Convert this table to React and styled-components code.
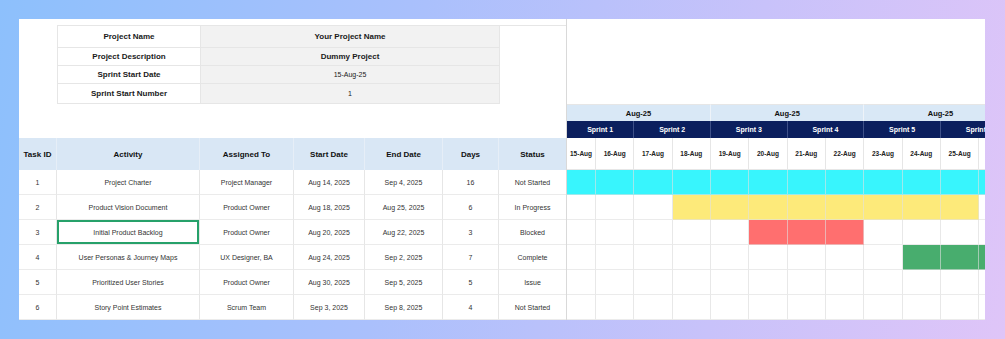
import React from 'react';
import styled, { createGlobalStyle } from 'styled-components';

const GlobalStyle = createGlobalStyle`
  * { box-sizing: border-box; }
  body {
    margin: 0;
    font-family: "Liberation Sans", Arial, sans-serif;
  }
`;

const Page = styled.div`
  width: 1005px;
  height: 339px;
  padding: 19px 20px 19px 19px;
  background: linear-gradient(100deg, #8dc0fc 0%, #aac0fc 40%, #c8c2fa 72%, #dfc5f8 100%);
`;

const Sheet = styled.div`
  display: flex;
  height: 301px;
  background: #fff;
  overflow: hidden;
`;

const Left = styled.div`
  width: 548px;
  flex: none;
  padding-top: 6px;
  border-right: 1px solid #d9d9d9;
`;

const Info = styled.div`
  display: grid;
  grid-template-columns: 143px 299px;
  grid-template-rows: 22px 18px 18px 20px;
  margin: 0 0 34px 38px;
  border-top: 1px solid #e6e6e6;
  border-left: 1px solid #e6e6e6;
`;

const InfoCell = styled.div`
  display: flex;
  align-items: center;
  justify-content: center;
  background: ${p => (p.$value ? '#f2f2f2' : '#fff')};
  border-right: 1px solid #e6e6e6;
  border-bottom: 1px solid #e6e6e6;
  font-size: ${p => (p.$light ? '7px' : '8px')};
  font-weight: ${p => (p.$light ? 400 : 700)};
  color: #1a1a1a;
`;

const cols = '38px 143px 94px 71px 78px 56px 67px';

const Row = styled.div`
  display: grid;
  grid-template-columns: ${cols};
  height: ${p => p.$h}px;
`;

const HeadCell = styled.div`
  display: flex;
  align-items: center;
  justify-content: center;
  background: #d9e7f5;
  border-right: 1px solid #e6eef7;
  font-size: 8px;
  font-weight: 700;
  color: #111;
  &:last-child { border-right: none; }
`;

const Cell = styled.div`
  display: flex;
  align-items: center;
  justify-content: center;
  border-right: 1px solid #e6e6e6;
  border-bottom: 1px solid #ebebeb;
  font-size: 7px;
  color: #333;
  box-shadow: ${p => (p.$selected ? 'inset 0 0 0 2px #26a16a' : 'none')};
  &:last-child { border-right: none; }
`;

const Gantt = styled.div`
  flex: 1;
  min-width: 0;
  overflow: hidden;
  padding-top: 85px;
`;

const GRow = styled.div`
  display: grid;
  grid-template-columns: 29px repeat(12, 38.33px);
  height: ${p => p.$h}px;
  width: 500px;
`;

const MonthCell = styled.div`
  grid-column: span 4;
  display: flex;
  align-items: center;
  justify-content: center;
  background: #d9e8f6;
  border-top: 1px solid #e6e6e6;
  border-right: 1px solid #eef3f9;
  font-size: 7.5px;
  font-weight: 700;
  color: #111;
`;

const SprintCell = styled.div`
  grid-column: span 2;
  display: flex;
  align-items: center;
  justify-content: center;
  background: #0b1f5e;
  border-right: 1px solid #3e5088;
  font-size: 7px;
  font-weight: 700;
  color: #fff;
`;

const DayCell = styled.div`
  display: flex;
  align-items: center;
  justify-content: center;
  border-right: 1px solid #e6e6e6;
  border-bottom: 1px solid #e6e6e6;
  font-size: 6.5px;
  font-weight: 700;
  color: #222;
`;

const BarCell = styled.div`
  background: ${p => p.$fill || '#fff'};
  border-right: 1px solid ${p => (p.$fill ? 'rgba(225,225,225,0.6)' : '#e8e8e8')};
  border-bottom: 1px solid ${p => (p.$fill ? 'rgba(225,225,225,0.6)' : '#ebebeb')};
`;

const info = [
  ['Project Name', 'Your Project Name'],
  ['Project Description', 'Dummy Project'],
  ['Sprint Start Date', '15-Aug-25', true],
  ['Sprint Start Number', '1', true],
];

const headers = ['Task ID', 'Activity', 'Assigned To', 'Start Date', 'End Date', 'Days', 'Status'];

const statusColor = {
  'Not Started': '#38f5fd',
  'In Progress': '#fdea7a',
  Blocked: '#ff6f6f',
  Complete: '#48ad6e',
};

const tasks = [
  { id: 1, name: 'Project Charter', who: 'Project Manager', start: 'Aug 14, 2025', end: 'Sep 4, 2025', days: 16, status: 'Not Started', from: 0, to: 11 },
  { id: 2, name: 'Product Vision Document', who: 'Product Owner', start: 'Aug 18, 2025', end: 'Aug 25, 2025', days: 6, status: 'In Progress', from: 3, to: 10 },
  { id: 3, name: 'Initial Product Backlog', who: 'Product Owner', start: 'Aug 20, 2025', end: 'Aug 22, 2025', days: 3, status: 'Blocked', from: 5, to: 7, selected: true },
  { id: 4, name: 'User Personas & Journey Maps', who: 'UX Designer, BA', start: 'Aug 24, 2025', end: 'Sep 2, 2025', days: 7, status: 'Complete', from: 9, to: 11 },
  { id: 5, name: 'Prioritized User Stories', who: 'Product Owner', start: 'Aug 30, 2025', end: 'Sep 5, 2025', days: 5, status: 'Issue', from: -1, to: -1 },
  { id: 6, name: 'Story Point Estimates', who: 'Scrum Team', start: 'Sep 3, 2025', end: 'Sep 8, 2025', days: 4, status: 'Not Started', from: -1, to: -1 },
];

// last column is only a sliver in view, so its label stays blank
const days = Array.from({ length: 12 }, (_, i) => (i < 11 ? `${15 + i}-Aug` : ''));
const sprints = ['Sprint 1', 'Sprint 2', 'Sprint 3', 'Sprint 4', 'Sprint 5', 'Sprint 6'];

export default function App() {
  return (
    <Page>
      <GlobalStyle />
      <Sheet>
        <Left>
          <Info>
            {info.map(([label, value, light]) => (
              <React.Fragment key={label}>
                <InfoCell>{label}</InfoCell>
                <InfoCell $value $light={light}>{value}</InfoCell>
              </React.Fragment>
            ))}
          </Info>
          <Row $h={32}>
            {headers.map(h => <HeadCell key={h}>{h}</HeadCell>)}
          </Row>
          {tasks.map(t => (
            <Row $h={25} key={t.id}>
              <Cell>{t.id}</Cell>
              <Cell $selected={t.selected}>{t.name}</Cell>
              <Cell>{t.who}</Cell>
              <Cell>{t.start}</Cell>
              <Cell>{t.end}</Cell>
              <Cell>{t.days}</Cell>
              <Cell>{t.status}</Cell>
            </Row>
          ))}
        </Left>
        <Gantt>
          <GRow $h={17}>
            {['a', 'b', 'c'].map(k => <MonthCell key={k}>Aug-25</MonthCell>)}
          </GRow>
          <GRow $h={17}>
            {sprints.map(s => <SprintCell key={s}>{s}</SprintCell>)}
          </GRow>
          <GRow $h={32}>
            {days.map((d, i) => <DayCell key={i}>{d}</DayCell>)}
          </GRow>
          {tasks.map(t => (
            <GRow $h={25} key={t.id}>
              {days.map((d, i) => (
                <BarCell key={i} $fill={i >= t.from && i <= t.to ? statusColor[t.status] : null} />
              ))}
            </GRow>
          ))}
        </Gantt>
      </Sheet>
    </Page>
  );
}
